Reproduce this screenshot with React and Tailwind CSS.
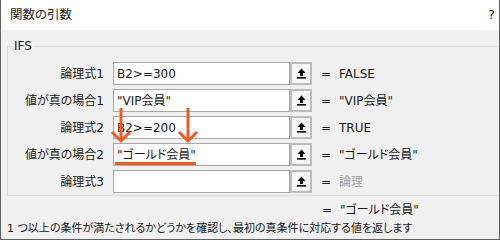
import React from "react";

const rows = [
  { label: "論理式1", value: "B2>=300", result: "FALSE" },
  { label: "値が真の場合1", value: "\"VIP会員\"", result: "\"VIP会員\"" },
  { label: "論理式2", value: "B2>=200", result: "TRUE" },
  { label: "値が真の場合2", value: "\"ゴールド会員\"", result: "\"ゴールド会員\"" },
  { label: "論理式3", value: "", result: "論理", muted: true },
];

function RefIcon() {
  return (
    <svg width="9" height="11" viewBox="0 0 9 11">
      <path d="M4.5 0.5 L8.5 5 L6 5 L6 8 L3 8 L3 5 L0.5 5 Z" fill="#000" />
      <rect x="0" y="9" width="9" height="1.6" fill="#000" />
    </svg>
  );
}

function ArgRow({ row }) {
  return (
    <div className="flex items-center h-[23px]">
      <div className="w-[97px] text-right pr-[1px]">{row.label}</div>
      <div className="ml-[8px] w-[177px] h-[23px] bg-white border border-[#a8a8a8] flex items-center pl-[3px] whitespace-nowrap">
        {row.value}
      </div>
      <div className="w-[22px] h-[23px] border-2 border-[#bdbdbd] bg-[#f7f7f7] flex items-center justify-center">
        <RefIcon />
      </div>
      <div className="ml-[9px] w-[18px]">=</div>
      <div className={row.muted ? "text-[#a0a0a0]" : ""}>{row.result}</div>
    </div>
  );
}

export default function App() {
  return (
    <div className="relative w-[500px] h-[240px] flex flex-col border-x border-b border-[#606060] overflow-hidden font-['DejaVu_Sans','Noto_Sans_CJK_JP',sans-serif] [font-feature-settings:'palt'] text-[12px] leading-[14px] text-[#1a1a1a]">
      <div className="h-[30px] shrink-0 bg-white flex items-center justify-between pl-[9px] pr-[4px]">
        <span className="text-[12.5px]">関数の引数</span>
        <span className="text-[13px]">?</span>
      </div>
      <div className="flex-1 bg-[#f0f0f0]">
        <fieldset className="mt-[9px] ml-[6px] w-[520px] border border-[#dcdcdc] pb-[2px]">
          <legend className="ml-[5px] px-[1px] leading-[14px]">IFS</legend>
          <div className="pt-[9px] flex flex-col gap-[4px]">
            {rows.map((r) => (
              <ArgRow key={r.label} row={r} />
            ))}
          </div>
        </fieldset>
        <div className="mt-[7px] flex h-[14px]">
          <div className="ml-[321px] w-[18px]">=</div>
          <div>"ゴールド会員"</div>
        </div>
        <div className="mt-[5px] pl-[6px] whitespace-nowrap text-[11px]">
          1 つ以上の条件が満たされるかどうかを確認し、最初の真条件に対応する値を返します
        </div>
      </div>
      <svg className="absolute left-0 top-0" width="500" height="240" viewBox="0 0 500 240">
        <g stroke="#f05a22" strokeWidth="3" fill="none">
          <line x1="120" y1="108" x2="120" y2="140" />
          <polyline points="111,132 120,141 129,132" />
          <line x1="187" y1="108" x2="187" y2="140" />
          <polyline points="178,132 187,141 196,132" />
        </g>
        <rect x="114" y="162" width="81" height="3" fill="#f05a22" />
      </svg>
    </div>
  );
}
